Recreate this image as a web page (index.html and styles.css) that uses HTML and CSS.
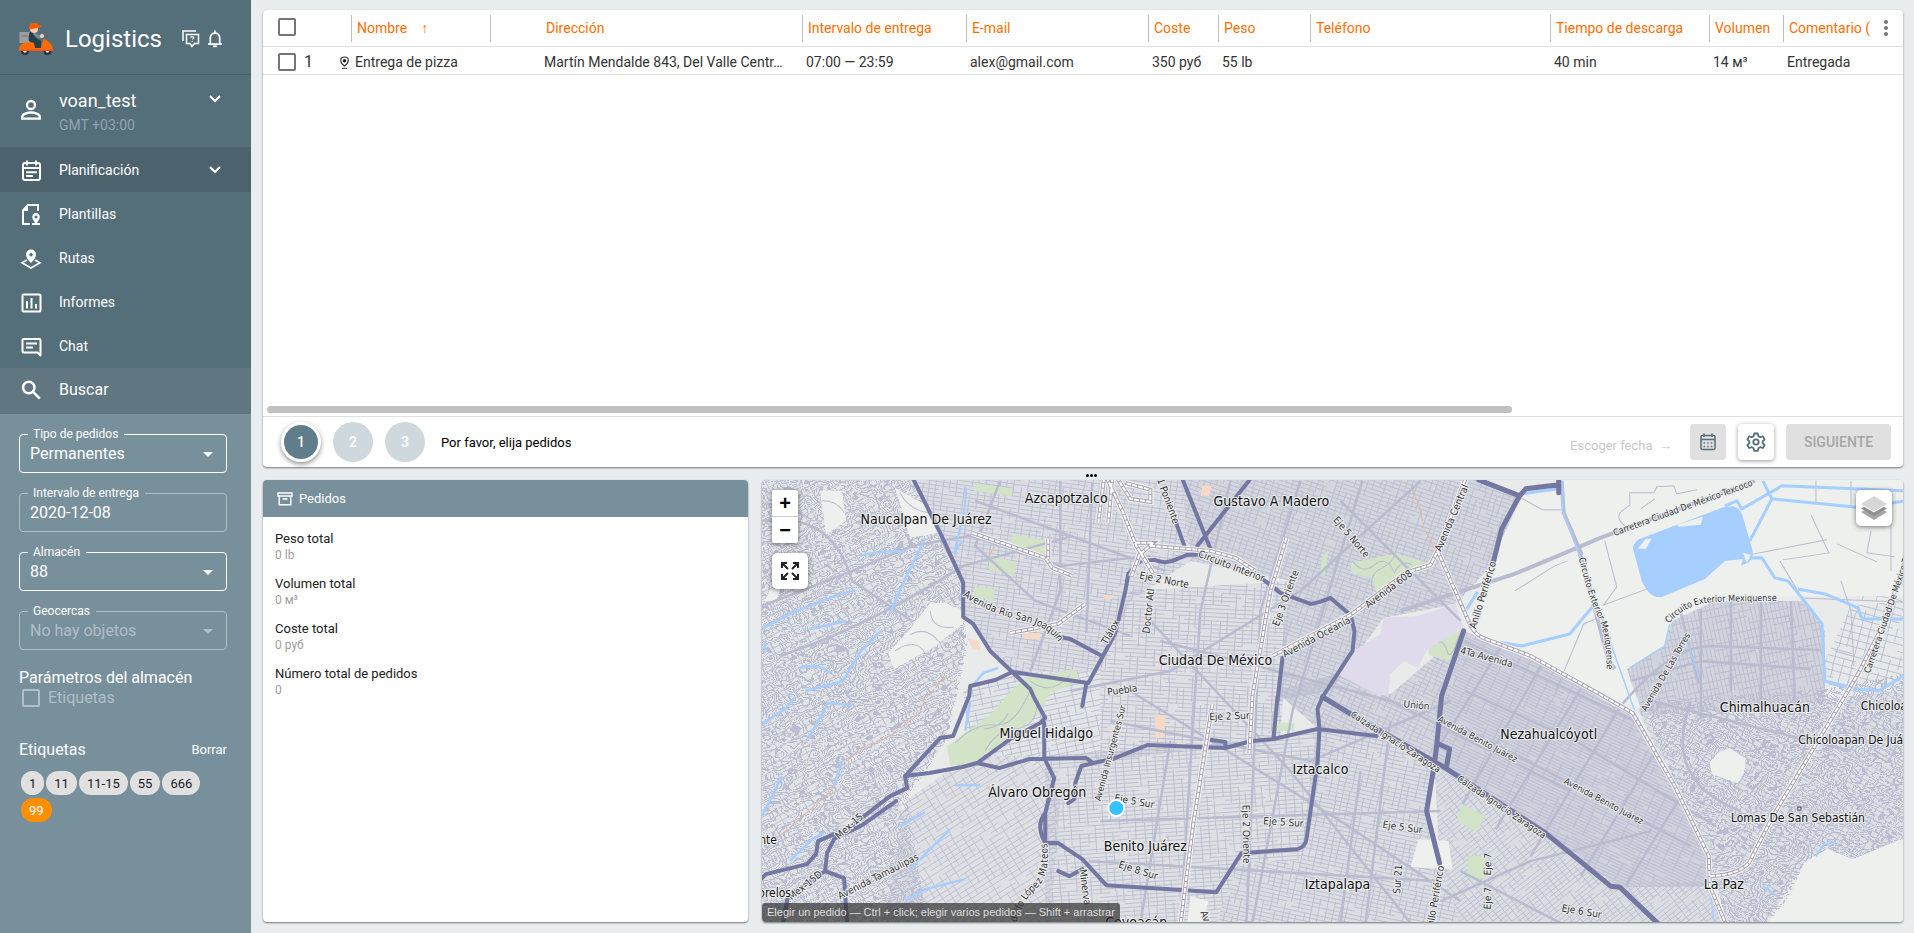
FILE: index.html
```html
<!DOCTYPE html>
<html lang="es">
<head>
<meta charset="utf-8">
<title>Logistics</title>
<link rel="stylesheet" href="styles.css">
</head>
<body>
<div class="app">
  <aside class="sidebar">
    <header class="brand">
      <svg class="brand-logo" viewBox="0 0 34 32" aria-hidden="true">
        <rect x="0.500" y="9" width="10" height="11" fill="#9e9e9e"/><path d="M2.500 13h6" stroke="#757575"/>
        <path d="M25 18l3 2" stroke="#90a4ae" stroke-width="2.500"/>
        <circle cx="6" cy="28" r="4" fill="#263238"/><circle cx="6" cy="28" r="1.800" fill="#eceff1"/>
        <circle cx="28.500" cy="28" r="4" fill="#263238"/><circle cx="28.500" cy="28" r="1.800" fill="#eceff1"/>
        <path d="M0 27c0-5 3-7.500 9-7.500h6l2 4h5l3-8 3 2c4 3 6 6 6 9.500z" fill="#ff6d00"/>
        <path d="M0 26.500h34v1.500H0z" fill="#f4511e"/>
        <path d="M11 9c3-2 6-1 7 2l2 6 2 1v7h-6l-1-5-5-2c-1-4 0-7 1-9z" fill="#263f4a"/>
        <path d="M15 10l4 4 4-1" stroke="#78909c" stroke-width="3" fill="none"/>
        <circle cx="23" cy="13" r="2" fill="#ffcdb8"/><circle cx="15" cy="6" r="4" fill="#ffcdb8"/>
        <path d="M10 5c0-6 8-7 9-3l4 .500-2 2-11 2z" fill="#ff5c00"/>
      </svg>
      <h1 class="brand-name">Logistics</h1>
      <button class="icon-button" aria-label="Ayuda">
        <svg width="18" height="18" viewBox="0 0 18 18" fill="none" stroke="#fff" stroke-width="1.500"><path d="M1 11V1h13M4.500 4.500h12v9h-4l-2.500 3-2-3h-3.500z"/><path d="M8.500 7.500q2-1.800 3.300 0q.3 1-1.600 1.800M10.200 11v1" stroke-width="1.200"/></svg>
      </button>
      <button class="icon-button icon-bell" aria-label="Notificaciones">
        <svg width="16" height="18" viewBox="0 0 16 18" fill="none" stroke="#fff" stroke-width="1.700"><path d="M1 14.200h14M3.300 14V8c0-6.500 9.400-6.500 9.400 0v6M8 3V.500"/><path d="M6 16.300h4"/></svg>
      </button>
    </header>
    <section class="account">
      <svg class="nav-icon" viewBox="0 0 22 22" fill="none" stroke="#fff" stroke-width="2.300"><circle cx="11" cy="6" r="4"/><path d="M2.200 19.700v-2c0-2.600 5.500-4.200 8.800-4.200s8.800 1.600 8.800 4.200v2z"/></svg>
      <div class="account-text"><span class="account-name">voan_test</span><span class="account-zone">GMT +03:00</span></div>
      <svg class="chevron" viewBox="0 0 12 8"><path d="M1 1l5 5 5-5" fill="none" stroke="#fff" stroke-width="2"/></svg>
    </section>
    <nav class="nav">
      <a class="nav-item nav-item-active" href="#"><svg class="nav-icon" viewBox="0 0 22 22" fill="none" stroke="#fff" stroke-width="2"><rect x="3" y="4" width="17" height="17" rx="2"/><path d="M3 9h17M7 1.500v5M16 1.500v5M6 13.300h11M6 17h7"/></svg><span>Planificación</span><svg class="chevron" viewBox="0 0 12 8"><path d="M1 1l5 5 5-5" fill="none" stroke="#fff" stroke-width="2"/></svg></a>
      <a class="nav-item" href="#"><svg class="nav-icon" viewBox="0 0 22 22" fill="none" stroke="#fff" stroke-width="2"><path d="M10 21H3V7.500L8 2h10v6"/><path d="M2 8l6-7v7z" fill="#fff" stroke="none"/><path d="M16 10a3.800 3.800 0 0 1 3.800 4c0 2.500-2.300 4.500-2.800 6h3v2h-8v-2h3c-.5-1.500-2.800-3.500-2.800-6a3.800 3.800 0 0 1 3.800-4zm0 2.500a1.500 1.500 0 1 0 .1 0z" fill="#fff" stroke="none" fill-rule="evenodd"/></svg><span>Plantillas</span></a>
      <a class="nav-item" href="#"><svg class="nav-icon" viewBox="0 0 22 22"><path d="M11 2.500a5 5 0 0 1 5 5c0 4-5 8.500-5 8.500s-5-4.500-5-8.500a5 5 0 0 1 5-5zm0 3.500a1.700 1.700 0 1 0 .1 0z" fill="#fff" fill-rule="evenodd"/><path d="M7 13l-5 2.800 9 5.200 9-5.200L15 13" fill="none" stroke="#fff" stroke-width="1.700"/></svg><span>Rutas</span></a>
      <a class="nav-item" href="#"><svg class="nav-icon" viewBox="0 0 22 22" fill="none" stroke="#fff" stroke-width="2"><rect x="2.500" y="3.500" width="18" height="17" rx="1"/><path d="M7 10v7.500M11.500 7v10.500M16 13v4.500"/></svg><span>Informes</span></a>
      <a class="nav-item" href="#"><svg class="nav-icon" viewBox="0 0 22 22" fill="none" stroke="#fff" stroke-width="2"><path d="M21 21l-3.500-3.500h-14q-1 0-1-1V5q0-1 1-1h16q1 0 1 1v16M6 8.500h11M6 12.500h7"/></svg><span>Chat</span></a>
      <a class="nav-item nav-item-search" href="#"><svg class="nav-icon" viewBox="0 0 22 22" fill="none" stroke="#fff" stroke-width="2.500"><circle cx="8.800" cy="8.500" r="5.700"/><path d="M13 12.800l6.800 6.800"/></svg><span>Buscar</span></a>
    </nav>
    <form class="filters">
      <div class="field"><label for="tipo">Tipo de pedidos</label><select id="tipo"><option>Permanentes</option></select><i class="caret"></i></div>
      <div class="field field-dim"><label for="intervalo">Intervalo de entrega</label><input id="intervalo" type="text" value="2020-12-08"></div>
      <div class="field"><label for="almacen">Almacén</label><select id="almacen"><option>88</option></select><i class="caret"></i></div>
      <div class="field field-dim field-off"><label for="geo">Geocercas</label><select id="geo" disabled><option>No hay objetos</option></select><i class="caret"></i></div>
      <div class="params">
        <h2>Parámetros del almacén</h2>
        <label class="check-label"><input class="check check-light" type="checkbox" disabled>Etiquetas</label>
      </div>
      <div class="tags-head"><h2>Etiquetas</h2><button type="button" class="clear">Borrar</button></div>
      <div class="tags"><button type="button" class="tag">1</button><button type="button" class="tag">11</button><button type="button" class="tag">11-15</button><button type="button" class="tag">55</button><button type="button" class="tag">666</button><button type="button" class="tag tag-on">99</button></div>
    </form>
  </aside>

  <main class="main">
    <section class="card orders">
      <div class="grid">
        <table class="table">
          <colgroup><col class="c-check"><col class="c-name"><col class="c-gap"><col class="c-address"><col class="c-interval"><col class="c-mail"><col class="c-cost"><col class="c-weight"><col><col class="c-unload"><col class="c-volume"><col class="c-comment"></colgroup>
          <thead><tr>
            <th><input class="check" type="checkbox" aria-label="Seleccionar todo"></th>
            <th class="th-name"><span class="cell">Nombre<span class="sort">↑</span></span></th>
            <th><span class="cell"></span></th>
            <th><span class="cell cell-plain">Dirección</span></th>
            <th><span class="cell">Intervalo de entrega</span></th>
            <th><span class="cell">E-mail</span></th>
            <th><span class="cell">Coste</span></th>
            <th><span class="cell">Peso</span></th>
            <th><span class="cell">Teléfono</span></th>
            <th><span class="cell">Tiempo de descarga</span></th>
            <th><span class="cell">Volumen</span></th>
            <th><span class="cell cell-last"><span>Comentario (</span><button class="menu" aria-label="Columnas"><svg width="6" height="18" viewBox="0 0 6 18" fill="#757575"><circle cx="3" cy="3" r="2"/><circle cx="3" cy="9" r="2"/><circle cx="3" cy="15" r="2"/></svg></button></span></th>
          </tr></thead>
          <tbody><tr>
            <td><span class="pick"><input class="check" type="checkbox" aria-label="Seleccionar pedido 1"><span class="number">1</span></span></td>
            <td><span class="place"><svg width="9" height="13" viewBox="0 0 9 13"><path d="M4.500 1C-.5 1 .2 6 2.500 8.200L4.500 10l2-1.800C8.800 6 9.500 1 4.500 1z" fill="none" stroke="#333" stroke-width="1.200"/><circle cx="4.500" cy="4.700" r="1.700" fill="#222"/><path d="M2 12.300h5" stroke="#333"/></svg>Entrega de pizza</span></td>
            <td></td><td>Martín Mendalde 843, Del Valle Centr…</td><td>07:00 — 23:59</td><td>alex@gmail.com</td><td>350 руб</td><td>55 lb</td><td></td><td>40 min</td><td>14 м³</td><td>Entregada</td>
          </tr></tbody>
        </table>
        <div class="scroll"><div class="thumb"></div></div>
      </div>
      <footer class="steps">
        <button class="step step-on">1</button><button class="step">2</button><button class="step">3</button>
        <span class="prompt">Por favor, elija pedidos</span>
        <span class="date-hint">Escoger fecha&nbsp; →</span>
        <button class="tool tool-off" aria-label="Calendario"><svg width="16" height="18" viewBox="0 0 16 18" fill="none" stroke="#546e7a" stroke-width="1.500"><rect x="1" y="2.500" width="14" height="14" rx="1.500"/><path d="M1 6.500h14M4 .5V4M12 .5V4"/><path d="M3.500 10h9.500M3.500 13.500h9.500" stroke-width="1.500" stroke-dasharray="1.500 2.200"/></svg></button>
        <button class="tool" aria-label="Ajustes"><svg width="20" height="20" viewBox="0 0 20 20" fill="none" stroke="#546e7a" stroke-width="1.800"><circle cx="10" cy="10" r="2.700"/><path d="M8.300 1.500h3.400l.7 2.700 1.800 1 2.700-.8 1.700 3-2 1.900v1.800l2 1.900-1.700 3-2.700-.8-1.800 1-.7 2.700H8.300l-.7-2.700-1.800-1-2.700.8-1.700-3 2-1.900V9.300l-2-1.900 1.700-3 2.700.8 1.800-1z" stroke-linejoin="round"/></svg></button>
        <button class="next" disabled>SIGUIENTE</button>
      </footer>
    </section>
    <div class="splitter"><i></i><i></i><i></i></div>
    <div class="bottom">
      <section class="card summary">
        <h2 class="summary-head"><svg width="16" height="14" viewBox="0 0 16 14" fill="none" stroke="#fff" stroke-width="1.400"><path d="M1 1h14v3H1zM2.200 4v8.700h11.600V4M5.500 7h5"/></svg>Pedidos</h2>
        <dl class="totals">
          <div><dt>Peso total</dt><dd>0 lb</dd></div>
          <div><dt>Volumen total</dt><dd>0 м³</dd></div>
          <div><dt>Coste total</dt><dd>0 руб</dd></div>
          <div><dt>Número total de pedidos</dt><dd>0</dd></div>
        </dl>
      </section>
      <section class="card map">
        <svg class="map-canvas" viewBox="762 479 1140 442" preserveAspectRatio="xMidYMid slice" role="img" aria-label="Mapa de Ciudad de México">
          <defs>
            <filter id="contours" x="0" y="0" width="100%" height="100%" color-interpolation-filters="sRGB">
              <feTurbulence type="fractalNoise" baseFrequency="0.022 0.034" numOctaves="3" seed="8"/>
              <feColorMatrix values="0 0 0 0 .73  0 0 0 0 .74  0 0 0 0 .82  1 0 0 0 0"/>
              <feComponentTransfer><feFuncA type="discrete" tableValues="0 1 0 0 1 0 0 1 0 0 1 0 0 1 0 0 1 0 0 1 0 0 1 0 0 1 0 0 1 0 0 1 0 0 1 0 0 1 0 0 1 0 0 1 0 0 1 0 0 1 0 0 1 0 0 1 0 0"/></feComponentTransfer>
            </filter>
            <clipPath id="hills"><path d="M760 478h152l50 110 5 60-20 90-40 60 20 122H760z"/></clipPath>
            <clipPath id="east"><path d="M1640 700l184-12 78-15v165l-50 20-26-10-22 13-30 61H1726l-20-65z"/></clipPath>
          </defs>
          <rect x="760" y="470" width="1146" height="460" fill="#e9ebea"/>
          <g clip-path="url(#hills)"><rect x="760" y="476" width="232" height="450" filter="url(#contours)"/></g>
          <g clip-path="url(#east)"><rect x="1630" y="670" width="280" height="260" filter="url(#contours)"/></g>
          <g id="streets" fill="none" stroke="#bcbfd1"></g>
          <g fill="#d2e3c8">
            <path d="M947 745l45-33 14-17 19-18 50-9 5 12-30 12-10 20-30 23-35 25-25 5z"/>
            <path d="M1012 533l33 7v13l-33-8zM990 555l26 6-3 15-25-8zM975 585l20 3-2 12-20-5zM974 482l38 6v8l-38-6z"/>
            <path d="M1350 562l45-9 30 8-20 12-28 20-6-16-20-5zM1428 647l34-19-12 32-22-6z"/>
            <path d="M1462 803l22 12-8 17-20-14zM1467 855h18v22h-18zM1322 555l6-6-4 25h-5zM1276 722h18v8h-18zM1096 892l8 30h-10z"/>
          </g>
          <path fill="none" stroke="#b9bccf" d="M1352 560q10 14 22 4t20 8q6-14 18-8M1372 590q-4-16 8-22t14-14M1432 645q10-10 14 4t12-14M955 742q20-20 40-18t35-35M985 750q10-20 30-22t22-24M1030 680q20 16 40-6M1008 712q-6 14-24 16"/>
          <path fill="#f6dac6" d="M1024 632h16v6h-16zM967 637l12 4 1 8-8-2zM1155 713l10 2-1 22h-9zM1202 485h9l-2 10h-9zM1104 594h8v4h-8z"/>
          <path fill="none" stroke="#eab39c" stroke-dasharray="7 2" d="M1411 488l8 18 4 20 12 24M925 695l-6 18-30 22-28 12-20 18-10 25-20 18-30 26-15 12M946 675l-20 22M986 560l8-14M922 545v-8"/>
          <path fill="#dfdbec" d="M1455 603l8 24-36 21-10 19-14-7-13 13-2 20-9 2-42-22 13-21 30-19 3-16 34-2z"/>
          <g fill="#edf0ed">
            <path d="M1522 497l36-18h348v116h-102l-90 3-43 22-7 25-38 23 14 40-40-18-70-38-45-16-15-16 30-80z"/>
            <path d="M1765 924l24-29 15-34 22-13 26 10 54-22v88zM1719 751l10-4 16 11-2 14-6 10-12-4-14-5-2-12zM1418 838l30 2 4 28-42-2z"/>
            <path d="M888 652l20-22 22-28 16 0 17 8 0 12-26 22-25 14-18 10zM895 487l35 20 10 25-30 5zM1190 895l18 5-6 22h-15zM820 490l22 0 4 30-20 14zM770 590l12-6-6 16h-12z"/>
          </g>
          <path fill="none" stroke="#bcbfd1" d="M895 650q20-14 30 2M910 634q16-10 30 8M930 610q2 20 24 16M900 492q10 20 34 20M822 500q16 0 22 12"/>
          <g fill="none" stroke="#b9bccf">
            <path stroke-width="4" d="M1514 573l60-25 23-10 157-58M1400 610l114-37M1561 480l2 32 18 42M1578 548l30 112 6 8"/>
            <path stroke-width="1" d="M1520 497l22 12h18M1624 525q-12-10 0-17l5-4v-12h24l3-6 17-1 3 8 20-4M1604 540l12 46-13 18 103-38 42-12 78-15M1779 560l22 37 101 4M1810 514l18 38-46 7M1815 480v23M1850 480v24M1514 590l40-25 13-5M1555 690l28-67 21-9M1640 508l14-10M1836 543l40 18M1840 580l10 30 3 55M1870 530l-4 22 28 4M1890 500v70M1834 650l35 10"/>
            <path stroke-width="2.500" d="M762 605q80-30 150-60l58-10 90 30 90-10M780 655q90-30 183-90l110-30M762 520q70-10 90 60l60 40M975 500l190 70M1000 480l-25 65 60 55 95 35M1060 480v110l-30 80M1092 482l-6 150M1230 480l-30 130-20 312M1300 480l-40 130-14 312M1362 480l-70 230-40 212M1340 500l120 120M1420 480l-120 110-130 80-100 20M1160 640l230 60 180 90M1130 690l210 130 120 80M1150 620l140 150 120 152M1110 720l200 40 140-60M1100 820l340-10M1090 860l350 20M1170 740l-30 182M1360 770l-20 152M1390 720l-25 202M1460 870l100 52M1440 900l90-40 120-30"/>
            <path stroke-width="2.500" d="M1465 690l110 50 140 85M1450 720l240 125M1464 640l170 80M1500 647l-75 120M1540 665l-78 138M1580 688l-85 140M1620 705l-90 150M1655 750l-75 125M1680 795l-55 90M1680 612l18 70M1700 608v110M1730 600v90M1760 600v110M1790 600l4 100M1630 680l70-20 110 8M1620 705q50-60 90-60l110 4M1690 700q-30 80 50 110M1650 700l200 50"/>
          </g>
          <g fill="none" stroke="#a6ceff" stroke-width="3" stroke-linejoin="round">
            <path fill="#a6ceff" stroke="none" d="M1632 547q2-8 10-10l79-30q16-5 20 6l10 34q3 10-4 15l-43 16-43 18q-12 2-20-16z"/>
            <path d="M1762 480l9 18-22 42M1724 505l12-5 5 8 40-23 123 5M1771 498l90 9 43-7M1747 557l14 0 13 20 13 3 14 17 20 26 3 57 33 8 20 2 27-16M1797 588l27 5 33 14 4 11h43M1498 641l23 4 48-12 25-30M1463 613l14-22M1521 493l36-5"/>
            <path stroke-width="1.500" d="M1562 480v30l15 40 57 160M1629 667l35-22 5-22M1709 885l4 35M1686 640l12 35"/>
            <path d="M860 555q25-6 45-4M925 537l-12 25-10 20-13 30M762 628l30-16 35-14 28-9M810 628l36-8M765 640v10M762 724l25-18 8-10M805 690l38-10 18-30 20-20M800 667q20-5 30 5M808 738l20-36 24 2M842 760l-8 25M790 860l22-22 12-6M900 825l25-14M910 868l40-40M905 900l20-12 40-10M782 775l-20 40M970 700l-5 30M955 784h25M968 690l15-18 15-5" stroke-width="2.500"/>
            <path d="M962 540l-8 12 10-40 2-25M1725 700l12 8M1815 855l8-12 12-2M1762 885l12 8" stroke-width="2"/>
          </g>
          <path fill="#edf0ed" d="M1637 548l8-10 6 0-6 10zM1676 524l26-8-2 8-22 2zM1704 578l20-18 18-2-2 8zM1742 552l8 2-4 8z"/>
          <g fill="none" stroke="#7577a3" stroke-width="4" stroke-linejoin="round" stroke-linecap="round">
            <path d="M913 478l28 56 22 48v34l10 7 17 27 22 21 76 11 12-22 15-28 10-42 3-17 12-13 14-1q12 5 23-1l10-4h13"/>
            <path d="M1055 635l15 3 30 16M1012 671l-17 8-25 6-1 10-16 40-13 2-35 38 2 12-17 8-56 43-7 14-2 18-37 25-5 27M834 833l-16 7-2 13-9 10-41 10-8 8M825 870l19 7 3 45M896 800l-34 24-20 10"/>
            <path d="M905 775l24-3 33-6 15-4 33-24 30-16 5-5-11-20-4-9-18-17M977 762l22 5 30-9 57-1 7 5 19-4 35-14 78 3 26-7 22-2 44-10 17 2 42 5M1044 722v35l10 20-9 35v36M1045 812q-10 12 0 30l13 0 24 16 24 26 110 7 25-39 56-4q8-2 9-10l11-76 2-34-2-20 5-12M1277 696l-4 42M1282 657l-5 43M1058 870l11 5 13-7M1093 762l-12 3-6 17-1 16-6 4M1086 683l-4 22M1225 747v-6l-14-2M1262 578l18 14 30 11q8-1 20-6l20 17 4 16-2 20-30 46M1182 478l28 70M1250 478l-53 67M1175 520l9 25"/>
            <path stroke-width="5" d="M1478 479l41 16-18 33-9 36M1519 495l6-7 33-4M1558 480v12M1463 630l-22 65-5 50-2 17-8 48 13 52M1322 696l30 18 93 53 100 65 65 53 9 1 39 37M1438 743l11 5-3 17"/>
          </g>
          <g fill="none" stroke="#f4f3f5" stroke-width="6">
            <path id="rails" d="M1272 655l78-41 55-42 25-8 7-14 28-72M1437 550l33 75q6 10 15 13l45 17 67 37 35 20 42 73 34 70 1 30 17 40M1904 560l-20 60-27 53-13 22-72 120-24 47q-12 12-39 13M1286 537l-16 53-18 105-3 57M1212 703l-19 119-13 102M1150 545l60 5 25 7 20 13M972 532l73 25 7 10 20 8M1048 538v20M1010 632l48-9 27-20M1106 476l16 34 14 35 17 28M1116 476l14 22 20 3v-12l-25-7M1135 542h18l-14 12-8 22M1104 476l-6 46M1112 476l-4 46"/>
          </g>
          <use href="#rails" class="rail-edge"/>
          <use href="#rails" class="rail-core"/>
          <g class="road-labels" id="road-labels"></g>
          <g class="place-labels" id="place-labels"></g>
          <circle cx="1116" cy="807" r="8" fill="#33c3ff" stroke="#fff" stroke-width="2"/>
          <rect x="1797" y="806" width="3" height="3" fill="#fff" stroke="#444466"/>
        </svg>
        <div class="map-controls">
          <div class="zoom"><button aria-label="Acercar">+</button><button aria-label="Alejar">−</button></div>
          <button class="map-button" aria-label="Pantalla completa"><svg width="20" height="20" viewBox="0 0 20 20" fill="none" stroke="#222" stroke-width="2"><path d="M2 7V2h5M13 2h5v5M18 13v5h-5M7 18H2v-5M2 2l6 6M18 2l-6 6M18 18l-6-6M2 18l6-6"/></svg></button>
        </div>
        <button class="map-button map-layers" aria-label="Capas"><svg width="26" height="26" viewBox="0 0 26 26"><path d="M0 17l13 8 13-8-4-2-9 5-9-5z" fill="#a5a5a5"/><path d="M0 13.500l13 7.500 13-7.500-4-2-9 5-9-5z" fill="#8d8d8d"/><path d="M0 10l13 7.500L26 10 13 1z" fill="#fff"/><path d="M0 9l13 7.500L26 9 13 1z" fill="#d6d6d6"/></svg></button>
        <p class="map-hint">Elegir un pedido — Ctrl + click; elegir varios pedidos — Shift + arrastrar</p>
      </section>
    </div>
  </main>
</div>
<script src="map.js"></script>
</body>
</html>
```
FILE: styles.css
```css
* { box-sizing: border-box; }
body { margin: 0; background: #e9edf0; color: #212121; font-family: Roboto, "Noto Sans", sans-serif; font-size: 14px; }
h1, h2, dl, dd, p { margin: 0; font-weight: 400; }
button { border: 0; padding: 0; background: none; font: inherit; color: inherit; }
svg { display: block; flex: none; }
.app { display: flex; min-height: 100vh; }

.sidebar { width: 251px; flex: none; display: flex; flex-direction: column; background: #546e7a; color: #fff; }
.brand { height: 75px; display: flex; align-items: center; padding: 4px 28px 0 19px; border-bottom: 1px solid #4b636e; }
.brand-logo { width: 34px; height: 32px; }
.brand-name { flex: 1; margin-left: 12px; font-size: 24px; line-height: 32px; }
.icon-button { margin-left: 8px; }
.icon-bell { margin-left: 7px; }
.account { height: 72px; display: flex; align-items: flex-start; padding: 14px 30px 0 20px; }
.account .nav-icon { margin-top: 10px; }
.account-text { flex: 1; display: flex; flex-direction: column; margin-left: 17px; }
.account-name { font-size: 18px; line-height: 24px; }
.account-zone { font-size: 14px; line-height: 24px; color: #90a4ae; }
.account .chevron { margin-top: 6px; }
.nav-icon { width: 22px; height: 22px; }
.chevron { width: 12px; height: 8px; }
.nav-item { height: 44px; display: flex; align-items: center; padding: 0 30px 0 20px; color: #fff; text-decoration: none; }
.nav-item span { flex: 1; margin-left: 17px; }
.nav-item-active { height: 45px; background: #4c636e; }
.nav-item-search { height: 46px; padding-bottom: 3px; background: #607680; font-size: 16px; }
.filters { flex: 1; display: flex; flex-direction: column; gap: 20px; padding: 20px 24px 20px 19px; background: #78909c; font-size: 16px; }
.field { position: relative; height: 39px; border: 1px solid #fff; border-radius: 4px; }
.field-dim { border-color: #b0bec5; }
.field label { position: absolute; left: 8px; top: -8px; padding: 0 6px 0 5px; background: #78909c; font-size: 12px; line-height: 14px; }
.field select, .field input { appearance: none; width: 100%; height: 37px; padding: 0 10px; border: 0; background: none; color: #fff; font: inherit; opacity: 1; }
.field-off select { color: #b0bec5; }
.caret { position: absolute; right: 13px; top: 17px; border: 5px solid transparent; border-top-color: #fff; border-bottom: 0; pointer-events: none; }
.field-off .caret { border-top-color: #b0bec5; }
.params { display: flex; flex-direction: column; }
.filters h2 { font-size: 16px; line-height: 20px; }
.params h2 { margin-top: -2px; }
.check { appearance: none; width: 18px; height: 18px; margin: 0; border: 2px solid #757575; border-radius: 2px; background: #fff; flex: none; }
.check-light { border-color: #b0bec5; background: none; }
.check-label { display: flex; align-items: center; gap: 8px; padding-left: 3px; color: #b0bec5; line-height: 20px; }
.tags-head { display: flex; justify-content: space-between; align-items: center; margin-top: 12px; }
.clear { font-size: 13px; line-height: 20px; }
.tags { display: flex; flex-wrap: wrap; gap: 3px 2px; margin-top: -9px; padding-left: 2px; }
.tag { height: 24px; padding: 0 8px; border-radius: 12px; background: #e0e0e0; color: #212121; font-size: 13px; }
.tag-on { background: #ff8f00; color: #fff; }

.main { flex: 1; min-width: 0; display: flex; flex-direction: column; padding: 10px 11px 11px 12px; }
.card { background: #fff; border-radius: 4px; box-shadow: 0 1px 2px rgba(0, 0, 0, .5); }
.orders { height: 457px; display: flex; flex-direction: column; }
.grid { flex: 1; display: flex; flex-direction: column; justify-content: space-between; overflow: hidden; border-bottom: 1px solid #e0e0e0; }
.table { width: 100%; table-layout: fixed; border-collapse: collapse; color: #333; }
.table th, .table td { padding: 0; text-align: left; font-weight: 400; white-space: nowrap; overflow: hidden; text-overflow: ellipsis; border-bottom: 1px solid #e0e0e0; }
.table th { height: 36px; padding-top: 1px; color: #ff6f00; }
.table td { height: 28px; padding: 4px 0 0 4px; }
.table th:first-child, .table td:first-child { padding-left: 15px; }
.table .th-name { padding-left: 13px; }
.table td:nth-child(2) { padding-left: 2px; }
.cell { display: block; height: 27px; padding-left: 5px; border-left: 1px solid #bdbdbd; line-height: 27px; }
.cell-plain { padding-left: 6px; border-left: 0; }
.cell-last { display: flex; align-items: center; justify-content: space-between; padding-right: 14px; }
.sort { margin-left: 14px; }
.pick { display: flex; align-items: center; gap: 8px; }
.number { font-size: 16px; line-height: 18px; }
.place { display: flex; align-items: center; gap: 6px; }
.c-check { width: 75px; }
.c-name { width: 152px; }
.c-gap { width: 50px; }
.c-address { width: 262px; }
.c-interval { width: 164px; }
.c-mail { width: 182px; }
.c-cost { width: 70px; }
.c-weight { width: 92px; }
.c-unload { width: 159px; }
.c-volume { width: 74px; }
.c-comment { width: 120px; }
.scroll { padding: 0 4px 3px; }
.thumb { width: 76.3%; height: 7px; border-radius: 4px; background: #c1c1c1; }
.steps { height: 50px; display: flex; align-items: center; padding: 0 12px 0 18px; }
.step { width: 40px; height: 40px; margin-right: 12px; border-radius: 50%; background: #cfd8dc; color: #fff; font-size: 14px; font-weight: 500; }
.step-on { border: 3px solid #fff; background: #607d8b; box-shadow: 0 2px 5px rgba(0, 0, 0, .45); }
.prompt { flex: 1; margin-left: 4px; font-size: 13px; color: #000; }
.date-hint { margin-right: 18px; padding-top: 6px; font-size: 13px; color: #c8c8c8; }
.tool { width: 36px; height: 36px; margin-right: 12px; display: grid; place-items: center; border-radius: 4px; background: #fff; box-shadow: 0 1px 4px rgba(0, 0, 0, .4); }
.tool-off { background: #e0e0e0; box-shadow: none; }
.next { height: 36px; padding: 0 17px; border-radius: 4px; background: #e0e0e0; color: #a6a6a6; font-weight: 500; font-size: 14px; min-width: 105px; }
.splitter { height: 13px; display: flex; justify-content: center; align-items: center; gap: 1px; padding: 4px 0 0 16px; }
.splitter i { width: 3px; height: 3px; border-radius: 50%; background: #000; }
.bottom { flex: 1; display: flex; gap: 14px; }
.summary { flex: 485; overflow: hidden; }
.summary-head { height: 37px; display: flex; align-items: center; gap: 6px; padding-left: 14px; background: #78909c; color: #fff; font-size: 13px; }
.totals { display: flex; flex-direction: column; gap: 11px; padding: 13px 12px; font-size: 13px; line-height: 17px; }
.totals dd { font-size: 12px; color: #9e9e9e; }
.map { position: relative; flex: 1141; min-height: 442px; overflow: hidden; }
.map-canvas { position: absolute; width: 100%; height: 100%; }
.rail-edge { fill: none; stroke: #a5a1b0; stroke-width: 4px; }
.rail-core { fill: none; stroke: #fff; stroke-width: 2px; stroke-dasharray: 5 1; }
.place-labels, .road-labels { font-family: "DejaVu Sans Condensed", "DejaVu Sans", sans-serif; font-stretch: condensed; fill: #111; stroke: #eceef0; stroke-width: 2px; stroke-linejoin: round; paint-order: stroke; text-anchor: middle; }
.place-labels { font-size: 14px; }
.place-labels .small { font-size: 12px; }
.road-labels { font-size: 10px; fill: #333; dominant-baseline: central; }
.road-labels .long { font-size: 9px; }
.map-controls { position: absolute; left: 10px; top: 10px; display: flex; flex-direction: column; gap: 10px; }
.zoom { width: 26px; display: flex; flex-direction: column; border-radius: 2px; background: #fff; box-shadow: 0 1px 5px rgba(0, 0, 0, .5); }
.zoom button { height: 26px; font: 700 20px/26px "Liberation Sans", sans-serif; color: #000; }
.zoom button:first-child { height: 27px; border-bottom: 1px solid #ccc; }
.map-button { width: 36px; height: 36px; display: grid; place-items: center; border-radius: 5px; background: #fff; box-shadow: 0 1px 5px rgba(0, 0, 0, .5); }
.map-layers { position: absolute; right: 11px; top: 10px; }
.map-hint { position: absolute; left: 0; bottom: 0; padding: 0 5px; border-radius: 3px; background: rgba(50, 50, 50, .7); color: #ddd; font: 11px/19px "Liberation Sans", sans-serif; }
```
FILE: map.js
```js
const NS = "http://www.w3.org/2000/svg";
let seed = 7;
function rand() {
  seed = (seed * 16807) % 2147483647;
  return seed / 2147483647;
}
function add(parent, name, attrs, text) {
  const el = document.createElementNS(NS, name);
  for (const key in attrs) el.setAttribute(key, attrs[key]);
  if (text) el.textContent = text;
  parent.appendChild(el);
  return el;
}

// Districts: outline, street angle in degrees, block length and depth, stroke width, tint
const districts = [
  ["760,478 912,478 962,582 965,650 945,740 900,800 930,922 760,922", -28, 9, 6, 0.8, 0.16],
  ["912,478 1180,478 1190,560 1130,600 1100,670 1012,671 963,616 962,582", 8, 7, 4, 0.9, 0.28],
  ["885,922 905,800 970,755 1045,755 1060,800 1050,922", -32, 8, 5, 0.8, 0.22],
  ["1100,670 1130,590 1290,580 1280,740 1100,760", 3, 8, 4, 1, 0.22],
  ["963,690 1012,671 1100,670 1100,760 1045,755 970,755", -12, 9, 5, 0.9, 0.12],
  ["1180,478 1480,478 1519,495 1495,560 1455,603 1383,617 1330,690 1275,700 1290,580 1190,560", 18, 6, 4, 1, 0.45],
  ["1045,755 1280,738 1320,730 1316,790 1300,860 1240,860 1215,922 1045,922", -4, 8, 4, 0.9, 0.22],
  ["1275,690 1337,673 1390,693 1440,650 1463,630 1441,695 1434,765 1376,735 1320,730", 24, 6, 4, 1, 0.45],
  ["1316,728 1376,735 1434,765 1426,810 1439,862 1460,922 1215,922 1240,860 1300,860", 12, 7, 4, 0.9, 0.3],
  ["1463,630 1530,655 1632,712 1708,855 1709,885 1620,886 1434,765 1441,695", 25, 12, 3, 1, 0.55],
  ["1434,765 1620,886 1709,880 1726,922 1460,922 1439,862", -38, 7, 4, 0.9, 0.3],
  ["1626,668 1664,645 1671,620 1714,600 1804,600 1824,630 1824,700 1640,715", 78, 7, 4, 1, 0.5],
  ["1640,715 1902,690 1902,838 1852,858 1826,848 1804,861 1765,922 1726,922 1708,855", 30, 7, 5, 0.8, 0.25],
  ["1824,660 1850,605 1904,600 1904,690 1830,700", 15, 9, 7, 0.9, 0.05],
  ["1865,510 1904,490 1904,600 1850,600", 12, 14, 11, 0.8, 0]
];

function streetPath(box, blockLength, blockDepth) {
  let d = "";
  for (let y = box.y0; y < box.y1; y += blockDepth) {
    let x = box.x0;
    while (x < box.x1) {
      const run = 12 + rand() * 60;
      d += "M" + x.toFixed(0) + " " + y.toFixed(1) + "h" + run.toFixed(0);
      x += run + (rand() < 0.35 ? 6 + rand() * 10 : 0);
    }
  }
  for (let x = box.x0; x < box.x1; x += blockLength) {
    let y = box.y0;
    while (y < box.y1) {
      const run = 8 + rand() * 30;
      d += "M" + (x + rand() * 2).toFixed(1) + " " + y.toFixed(0) + "v" + run.toFixed(0);
      y += run + (rand() < 0.6 ? 5 + rand() * 14 : 0);
    }
  }
  return d;
}

const streets = document.getElementById("streets");
districts.forEach(([points, angle, length, depth, width, tint], i) => {
  const clip = add(streets, "clipPath", { id: "district" + i });
  add(clip, "polygon", { points });
  const pts = points.split(" ").map(p => p.split(",").map(Number));
  const xs = pts.map(p => p[0]);
  const ys = pts.map(p => p[1]);
  const cx = (Math.min(...xs) + Math.max(...xs)) / 2;
  const cy = (Math.min(...ys) + Math.max(...ys)) / 2;
  const r = Math.hypot(Math.max(...xs) - cx, Math.max(...ys) - cy);
  const group = add(streets, "g", { "clip-path": "url(#district" + i + ")" });
  add(group, "polygon", { points, fill: "#b9bccf", "fill-opacity": tint, stroke: "none" });
  add(group, "path", {
    d: streetPath({ x0: -r, x1: r, y0: -r, y1: r }, length, depth),
    transform: "translate(" + cx + " " + cy + ") rotate(" + angle + ")",
    "stroke-width": width
  });
});

// Text, centre x, baseline y, optional class
const places = [
  ["Naucalpan De Juárez", 926, 523], ["Azcapotzalco", 1066, 502], ["Gustavo A Madero", 1271, 505],
  ["Ciudad De México", 1215, 664], ["Miguel Hidalgo", 1046, 737], ["Álvaro Obregón", 1037, 796],
  ["Benito Juárez", 1145, 850], ["Coyoacán", 1136, 926], ["Iztacalco", 1320, 773], ["Iztapalapa", 1337, 888],
  ["Nezahualcóyotl", 1548, 738], ["Chimalhuacán", 1764, 711], ["La Paz", 1723, 888],
  ["Chicoloapan", 1893, 709, "small"], ["Chicoloapan De Juárez", 1858, 743, "small"],
  ["Lomas De San Sebastián", 1797, 821, "small"], ["nte", 768, 843, "small"], ["Morelos", 770, 896, "small"]
];
const placeLayer = document.getElementById("place-labels");
places.forEach(([text, x, y, kind]) => add(placeLayer, "text", { x, y, class: kind || "town" }, text));

// Text, centre x, centre y, angle
const roads = [
  ["Tlálox", 1110, 631, -60], ["Doctor Atl", 1148, 610, -84], ["Puebla", 1122, 689, -8], ["Eje 2 Norte", 1164, 579, 11],
  ["1 Poniente", 1168, 500, 70], ["Circuito Interior", 1231, 565, 21], ["Eje 5 Norte", 1351, 536, 50],
  ["Eje 3 Oriente", 1285, 597, -70], ["Avenida 608", 1388, 588, -37], ["Avenida Oceanía", 1316, 636, -28],
  ["Avenida Central", 1451, 517, -67], ["Anillo Periférico", 1482, 594, -73], ["4Ta Avenida", 1486, 656, 15],
  ["Carretera Ciudad De México-Texcoco", 1682, 507, -20], ["Eje 5 Sur", 1134, 800, 10], ["Eje 2 Sur", 1229, 715, -2],
  ["Avenida Insurgentes Sur", 1110, 752, -75], ["Eje 2 Oriente", 1246, 833, 89], ["Eje 5 Sur", 1283, 821, 4],
  ["Eje 8 Sur", 1138, 869, 18], ["Mex-15", 849, 825, -42], ["Mex-15D", 805, 884, -38],
  ["Avenida Tamaulipas", 878, 875, -27], ["Minerva", 1085, 886, 82], ["Unión", 1416, 704, 5],
  ["Calzada Ignacio Zaragoza", 1395, 741, 33], ["Calzada Ignacio Zaragoza", 1501, 806, 34],
  ["Avenida Benito Juárez", 1477, 738, 28], ["Avenida Benito Juárez", 1603, 800, 28], ["Eje 5 Sur", 1402, 826, 8],
  ["Sur 21", 1397, 878, -86], ["Eje 7", 1487, 863, -88], ["Eje 7", 1487, 897, -88],
  ["Anillo Periférico", 1434, 899, -80], ["Eje 6 Sur", 1581, 910, 10], ["Av", 1205, 915, 70],
  ["Avenida De Las Torres", 1665, 671, -60], ["Carretera Ciudad De México-Texcoco", 1890, 602, -71]
];
const roadLayer = document.getElementById("road-labels");
roads.forEach(([text, x, y, angle]) =>
  add(roadLayer, "text", {
    class: text.length > 20 ? "long" : "short",
    transform: "translate(" + x + " " + y + ") rotate(" + angle + ")"
  }, text));

// Labels that follow a bend in their road
const bends = [
  ["Avenida Río San Joaquín", "M960 588Q985 607 1020 615T1064 644"],
  ["Circuito Exterior Mexiquense", "M1578 545Q1590 595 1600 615T1609 680"],
  ["Circuito Exterior Mexiquense", "M1660 628Q1680 599 1715 598T1785 597"],
  ["Adolfo López Mateos", "M1010 930Q1016 900 1032 886T1042 838"]
];
bends.forEach(([text, d], i) => {
  add(roadLayer, "path", { id: "bend" + i, d, fill: "none", stroke: "none" });
  const label = add(roadLayer, "text", { class: text.length > 25 ? "long" : "short" });
  add(label, "textPath", { href: "#bend" + i, startOffset: "50%" }, text);
});
```
